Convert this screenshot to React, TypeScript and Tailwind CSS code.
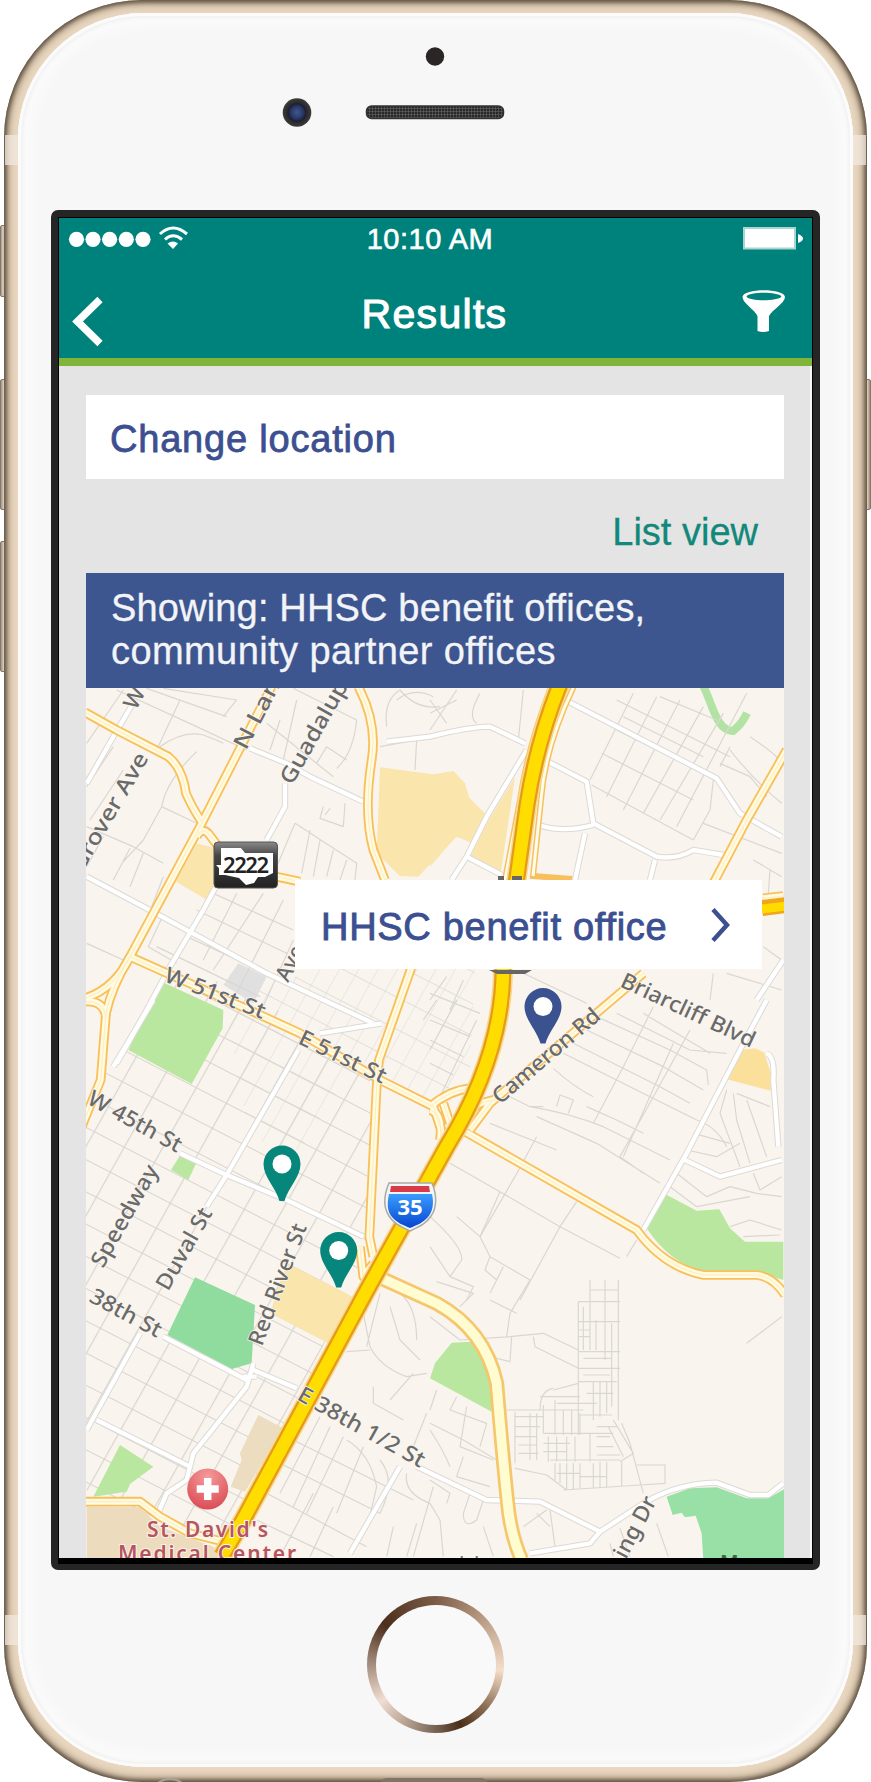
import type { ReactNode } from "react";

type TileName = "nw" | "ne" | "w" | "e" | "sw" | "se";

// Origin of every map tile; tile paths are drawn at three units per pixel.
const tileOrigin: Record<TileName, [number, number]> = {
  nw: [80, 680],
  ne: [430, 680],
  w: [80, 1000],
  e: [430, 1000],
  sw: [80, 1280],
  se: [430, 1280],
};

function Tile({ at, children }: { at: TileName; children: ReactNode }) {
  const [x, y] = tileOrigin[at];
  return <g transform={`translate(${x} ${y}) scale(0.33333)`}>{children}</g>;
}

type Road = [TileName, string];

const areas: [TileName, string, string][] = [
  ["nw", "#fae5ac", "M900 262 L1075 285 L1120 275 L1160 345 L1210 400 L1180 490 L1130 470 L1080 520 L1015 590 L960 588 L890 520 Z"],
  ["ne", "#fae5ac", "M0 285 L70 273 L105 310 L118 355 L165 400 L125 490 L82 465 L0 560 Z"],
  ["ne", "#fae5ac", "M255 290 L230 460 L212 578 L118 535 L170 430 Z"],
  ["nw", "#fae5ac", "M350 490 L405 505 L415 620 L378 658 L288 605 Z"],
  ["nw", "#e0e0e1", "M475 850 L560 890 L520 970 L430 915 Z"],
  ["w", "#b9e79f", "M245 -55 L430 30 L428 85 L335 252 L145 150 Z"],
  ["w", "#b9e79f", "M305 458 L350 487 L325 540 L273 510 Z"],
  ["w", "#fae5ac", "M620 790 L818 890 L745 1030 L570 940 Z"],
  ["sw", "#90dc9e", "M345 -8 L525 75 L515 250 L455 267 L262 165 Z"],
  ["sw", "#b9e79f", "M120 495 L220 560 L150 612 L140 635 L40 650 Z"],
  ["sw", "#ecdcc0", "M535 405 L610 445 L495 635 L452 620 L485 540 L480 520 Z"],
  ["sw", "#ecdcbd", "M20 680 L180 682 L240 740 L400 800 L430 835 L20 835 Z"],
  ["se", "#b9e79f", "M65 188 L125 185 L165 240 L180 300 L185 395 L0 295 L15 250 Z"],
  ["e", "#b9e79f", "M705 582 L800 632 L868 628 L900 685 L945 725 L1060 725 L1060 840 L980 815 L820 815 Q720 790 650 685 Z"],
  ["e", "#fae09b", "M930 150 L975 145 L1003 158 L1022 220 L1022 272 L890 238 Z"],
  ["se", "#99e0a6", "M710 650 L780 625 L860 622 L950 655 L1015 655 L1062 628 L1062 840 L820 840 L815 760 L797 707 L765 712 L755 698 L728 705 Z"],
];

const lanes: Road[] = [
  ["nw", "M20 190 L130 30 M20 320 L100 200 M30 420 L130 270 M110 30 L350 140 L500 210 M200 25 L440 110 M240 200 Q310 150 370 165 Q410 180 430 190 M250 25 L470 60 L430 110 M300 60 L230 210 M350 215 Q260 300 245 380 L190 480 L130 545 M20 440 L160 500 L250 550 M245 380 L350 430 M70 470 L20 560 M150 505 L100 600 M190 520 L150 620"],
  ["nw", "M640 25 L830 120 Q820 220 770 265 M560 130 L760 290 M600 120 L570 210 M650 60 L610 240 M710 250 L740 200 L800 240 M920 140 Q910 60 960 30 Q1010 90 1080 80 M900 200 L1010 180 L1005 270 M950 60 Q1000 20 1060 50 M730 380 L720 415 L790 440 L795 370 M750 385 L735 405"],
  ["nw", "M645 430 L590 560 M645 430 L830 550 L825 600 M690 450 L665 580 M720 480 L700 590 M760 510 L740 590 M800 540 L780 600 M20 790 L130 840 M250 590 L215 680"],
  ["nw", "M400 640 L640 750 M350 690 L620 820 M320 770 L560 880 M245 715 L205 800 L290 850 M470 640 L370 840 M550 640 L400 870 M610 660 L460 960 M640 780 L540 1000 M230 800 L540 950"],
  ["ne", "M80 30 L0 150 M150 40 Q110 110 140 130 M280 30 L265 180 M0 60 L50 130 M0 100 L80 60"],
  ["ne", "M610 40 L480 300 M680 50 L530 350 M750 60 L580 390 M820 80 L640 400 M880 100 L690 420 M950 40 L740 440 M850 300 L840 390 L790 480 M560 60 L900 230 M560 150 L700 220 M515 220 L790 360 M580 110 L820 230 M485 315 L790 480 M690 50 L860 120 M820 430 L1055 520 M900 210 Q970 300 1055 370 M960 170 Q1020 210 1050 240 M870 250 L960 290 L1010 350 M900 200 L870 260"],
  ["ne", "M970 540 L1055 590 M1020 570 L1015 640 M890 880 L1055 930 M850 880 L840 960 M1000 800 L1055 840 M280 880 L470 970 M0 940 L150 1000 M50 890 L0 960 M100 900 L60 990"],
  ["e", "M20 0 L-20 60 M80 0 L0 150 M140 60 L30 290 M0 60 L120 110 M0 120 L100 170 M0 190 L70 225 M370 205 Q430 260 490 290 M400 160 L600 260 L740 330 L800 360 Q860 380 890 440 M430 130 L690 260 L780 310 M470 90 L700 200 L820 270 M500 50 L720 150 L830 210 L835 255 M560 40 L780 150 L890 160 M640 40 L840 160 M670 20 L580 200 L490 370 M780 90 L670 290 L570 470 M730 130 L580 470 M340 320 L300 320 L240 290 M300 320 Q420 340 520 380 L720 480 M320 350 L500 430 L690 550 M380 320 L390 285 L430 300 L415 340 M180 370 L380 450 M320 410 L255 530 L150 710 M570 470 L640 520 M470 320 L560 360 L640 400"],
  ["e", "M890 270 L870 340 L930 500 M910 280 L920 360 L960 490 M950 300 L1010 470 M920 280 L1020 320 M770 450 L860 470 L930 430 M790 400 L900 430 M740 520 L830 590 L900 560 L980 580 L1055 590 M720 560 L800 620 L960 590 M970 520 L990 570 L1055 530 M900 680 L960 660 L1055 690 M940 710 L1050 705"],
  ["e", "M60 490 L210 575 L390 680 L570 775 M440 605 L390 680 L270 900 M590 770 L620 720 M210 575 L150 710 L180 770 L300 840 M80 650 L150 710 M180 770 L165 810 L200 840 M0 650 Q100 740 95 780 L60 830 L130 860 L110 900 M0 740 L60 830 M220 800 L180 880"],
  ["se", "M0 110 L90 180 L240 170 L340 160 L445 210 M310 170 L315 200 L445 265 M300 0 L240 100 L230 170 M180 60 L260 100 M245 170 L240 245 L180 230 M20 5 L130 40 L90 80 M950 190 L1055 110"],
  ["se", "M480 0 V210 M525 0 V240 M565 0 V420 M445 65 V465 M445 65 H570 M445 125 H570 M445 215 H570 M445 265 H570 M445 305 H560 M460 80 V210 M498 120 V210 M545 130 V380 M445 150 H480 M445 170 H480 M480 30 H565 M460 235 H545 M460 285 H540 M490 305 V420 M510 305 V410 M530 305 V400 M470 340 H550 M450 370 H500 M450 405 H545 M370 330 L445 310 M330 390 Q330 330 370 325 M330 350 H450 M380 370 H450 M230 390 H460 M255 395 V550 M340 375 V460 M375 360 V465 M400 390 V465 M425 390 V465 M450 400 V465"],
  ["se", "M255 410 H340 M255 440 H330 M255 470 H320 M265 495 H320 M265 520 H325 M300 400 V540 M320 400 V540 M355 470 V545 M380 470 V545 M410 470 V545 M435 470 V545 M480 460 V545 M340 460 H550 M340 490 H420 M340 515 H410 M360 540 H570 M500 440 H560 M500 470 H540 M500 500 H550 M500 525 H570 M550 420 L610 520 L570 545 M535 440 L580 530 M575 430 L600 490 L640 640 M375 550 V600 M390 550 V610 M410 550 V630 M430 550 V630 M450 550 V625 M490 550 V625 M510 545 V625 M530 545 V620 M575 545 V620 M400 630 L630 615 L705 610 V555 H620 M255 565 L350 585 L410 630 M380 580 H450 M450 590 H530"],
  ["se", "M0 450 Q40 510 60 560 M20 330 L0 390 M80 350 L60 390 L170 430 L150 500 M110 380 L90 500 L190 540 M0 430 L100 480 L200 540 M100 530 L80 590 L180 620 M0 600 L60 640 L50 670 M120 640 L100 700 Q100 750 140 720 L160 660 M0 670 L30 720 L40 830 M160 740 L190 830 M280 740 L350 690 M320 700 L360 740 M360 690 L375 800 M570 745 L600 830 M680 730 L715 830 M540 790 L550 830"],
  ["sw", "M850 100 L870 200 Q900 260 980 290 L1040 280 M900 40 L860 200 M930 80 L960 180 L1020 240 M960 40 Q1010 80 1010 180 M870 210 L800 215 M880 320 L880 370 L970 420 M1000 280 L930 360 M750 440 L640 680 M790 470 L680 700 M720 410 L600 640 M850 500 L770 700 M800 480 Q870 520 890 620 L860 750 M900 540 Q950 600 900 700 M640 480 L1000 660 M600 550 L900 700 M560 640 L860 800 M530 720 L760 830 M700 640 L600 830 M760 680 L690 830 M980 580 Q970 640 1050 670 M1010 730 L980 830 M940 740 L920 830 M1060 620 L1000 830 M1040 400 L1000 500"],
];

const streets: Road[] = [
  ["nw", "M165 60 L100 170 L20 310"],
  ["nw", "M20 590 L200 685 L560 880 L880 1030"],
  ["nw", "M510 205 L620 250 L690 290 L850 365"],
  ["nw", "M615 310 L615 380 L560 480 M405 625 L370 690 L270 860 L200 990 L110 1150"],
  ["ne", "M-130 185 L0 170 Q120 140 180 140 L285 190 M415 65 L860 295 L930 400 L1055 470 M290 210 L170 410 L110 530 L65 600 M110 530 L215 585"],
  ["ne", "M335 235 L470 305 L490 430 L680 530 Q740 540 790 510 L880 525 M325 435 Q400 460 490 435 M465 460 L435 600 M675 540 L660 600"],
  ["w", "M720 100 L905 70 M655 150 L440 525 L380 620 M300 460 L440 525 L620 600 L850 710 M220 0 L100 200"],
  ["e", "M1010 0 L930 150 L770 460 L640 690 M1010 160 Q1035 170 1030 240 L1045 440 M765 480 L870 530 L1055 480 M1060 -120 L980 0"],
  ["se", "M-40 560 L170 660 L330 665 L510 755 L640 670 Q740 610 860 608 L960 645 L1015 645 L1060 610 M510 755 L480 790 L300 820"],
  ["sw", "M180 160 L20 450 M250 170 L500 300 M50 420 L330 560 M520 250 L500 320 L340 520 L320 600 L260 640 L230 710 M520 270 L650 325 M960 560 L810 820 M490 290 L530 290"],
];

const arterials: Road[] = [
  ["nw", "M15 97 L110 150 L265 230 Q308 265 318 340 Q340 390 365 425"],
  ["nw", "M595 -20 L365 430 L150 830 Q105 925 15 955"],
  ["nw", "M150 830 Q95 920 78 1000 L62 1200 L5 1340"],
  ["nw", "M150 830 L530 1000 L660 1060 L900 1200 L1060 1280 L1090 1370"],
  ["nw", "M835 20 Q893 130 875 240 Q850 400 880 510 L915 600"],
  ["nw", "M350 470 Q365 440 385 460 L415 500 M590 590 L660 605"],
  ["nw", "M995 860 L897 1140 L890 1220 L868 1670 L880 1730"],
  ["nw", "M15 965 Q70 960 78 1010"],
  ["ne", "M1070 210 L950 420 L850 610"],
  ["ne", "M1000 655 L1060 648"],
  ["e", "M640 -80 L540 5 L180 310 L120 390"],
  ["e", "M105 395 L620 690 Q700 800 820 825 L980 825 Q1030 830 1065 885"],
  ["e", "M0 320 Q60 270 120 265 M0 330 Q40 340 30 420 M40 310 L60 370 M110 340 L150 310 L190 300"],
  ["w", "M840 740 L850 830 L880 790"],
  ["sw", "M15 665 L180 665 L240 710 L330 760 L450 790"],
];

const labels: [string, number, number, number, number][] = [
  ["W", 136, 711, 146, 692],
  ["N Lamar", 246, 751, 298, 652],
  ["Guadalupe", 292, 786, 356, 673],
  ["Grover Ave", 82, 873, 149, 758],
  ["W 51st St", 163, 981, 262, 1019],
  ["E 51st St", 297, 1043, 382, 1084],
  ["W 45th St", 86, 1103, 177, 1153],
  ["Speedway", 103, 1269, 159, 1170],
  ["Duval St", 168, 1292, 213, 1213],
  ["Red River St", 262, 1347, 307, 1227],
  ["38th St", 88, 1301, 157, 1338],
  ["E 38th 1/2 St", 296, 1399, 420, 1468],
  ["Cameron Rd", 500, 1105, 602, 1018],
  ["Briarcliff Blvd", 619, 986, 751, 1048],
  ["Ave", 288, 983, 305, 950],
  ["ing Dr", 626, 1560, 657, 1501],
];

function RoadLayer({ roads, width, color }: { roads: Road[]; width: number; color: string }) {
  return (
    <>
      {roads.map(([tile, d], i) => (
        <Tile key={i} at={tile}>
          <path d={d} fill="none" stroke={color} strokeWidth={width} strokeLinejoin="round" />
        </Tile>
      ))}
    </>
  );
}

function StreetLabel({ label }: { label: [string, number, number, number, number] }) {
  const [text, x1, y1, x2, y2] = label;
  const angle = (Math.atan2(y2 - y1, x2 - x1) * 180) / Math.PI;
  const length = Math.hypot(x2 - x1, y2 - y1);
  return (
    <text
      transform={`translate(${x1} ${y1}) rotate(${angle})`}
      textLength={length}
      lengthAdjust="spacingAndGlyphs"
      fontSize="22"
      fontWeight="500"
      fill="#6a6a6a"
      stroke="#faf7f0"
      strokeWidth="1.500"
      paintOrder="stroke"
    >
      {text}
    </text>
  );
}

function Pin({ x, y, color }: { x: number; y: number; color: string }) {
  return (
    <g transform={`translate(${x} ${y})`}>
      <path d="M-2.500 37 C-6 24 -18.500 13 -18.500 0 A18.500 18.500 0 0 1 18.500 0 C18.500 13 6 24 2.500 37 Z" fill={color} />
      <circle r="9.500" fill="#fff" />
    </g>
  );
}

const freeway = "M566 670 C546 716 534 760 527 805 L517 877 L503 968 C503 1030 480 1092 447 1146 L367 1290 L243 1520 L222 1556";
const parkway = "M-145 -5 L20 70 Q165 150 200 310 Q218 530 232 660 Q240 760 275 840";

function CityMap() {
  return (
    <svg viewBox="86 688 698 870" className="block h-[870px] w-[698px] [font-family:'Noto_Sans',sans-serif]">
      <defs>
        <pattern id="blocks" width="1" height="1" patternUnits="userSpaceOnUse" patternTransform="matrix(30 15.500 -14 25 90 1000)">
          <path d="M0 0 H1 M0 0 V1" stroke="#d8d4ce" strokeWidth="0.07" />
        </pattern>
        <pattern id="smallBlocks" width="1" height="1" patternUnits="userSpaceOnUse" patternTransform="matrix(15 7.700 -14 25 90 1000)">
          <path d="M0 0 H1 M0 0 V1" stroke="#dcd9d4" strokeWidth="0.06" />
        </pattern>
        <linearGradient id="shield" x1="0" y1="0" x2="0" y2="1">
          <stop offset="0" stopColor="#3a9cff" />
          <stop offset="1" stopColor="#0646cf" />
        </linearGradient>
        <linearGradient id="plate" x1="0" y1="0" x2="0" y2="1">
          <stop offset="0" stopColor="#8a8a8a" />
          <stop offset="0.300" stopColor="#444" />
          <stop offset="1" stopColor="#222" />
        </linearGradient>
        <radialGradient id="hospital" cx="0.500" cy="0.200" r="0.900">
          <stop offset="0" stopColor="#f49a9a" />
          <stop offset="1" stopColor="#d8434d" />
        </radialGradient>
      </defs>
      <rect x="86" y="688" width="698" height="870" fill="#f9f4ee" />
      <path d="M86 1120 L110 1060 L130 1050 L165 985 L235 980 L370 1075 L370 1240 L330 1330 L300 1400 L245 1510 L210 1540 L86 1490 Z" fill="url(#blocks)" />
      <path d="M225 1005 L300 975 L410 920 L475 965 L470 1070 L440 1110 L380 1080 L360 1055 L300 1150 L250 1140 Z" fill="url(#smallBlocks)" />
      {areas.map(([tile, fill, d], i) => (
        <Tile key={i} at={tile}>
          <path d={d} fill={fill} />
        </Tile>
      ))}
      <path d="M700 680 C712 698 714 730 733 731 Q742 724 747 713" fill="none" stroke="#b3e3a4" strokeWidth="8" />
      <RoadLayer roads={lanes} width={3.6} color="#dad7d2" />
      <RoadLayer roads={streets} width={19} color="#dcdad6" />
      <RoadLayer roads={streets} width={13} color="#ffffff" />
      <path d="M553 682 Q528 745 520 800 L504 885 M576 682 Q545 745 541 800 L533 876 L572 879" fill="none" stroke="#f7c05c" strokeWidth="6" />
      <path d="M553 682 Q528 745 520 800 L504 885 M576 682 Q545 745 541 800 L533 876" fill="none" stroke="#fffceb" strokeWidth="3" />
      <RoadLayer roads={arterials} width={29} color="#f9c05a" />
      <RoadLayer roads={arterials} width={18} color="#fffae0" />
      <RoadLayer roads={arterials} width={2} color="#fbe6b0" />
      <Tile at="se">
        <path d={parkway} fill="none" stroke="#f6c66c" strokeWidth="45" />
        <path d={parkway} fill="none" stroke="#fffcd2" strokeWidth="29" />
      </Tile>
      <path d={freeway} fill="none" stroke="#f8d98a" strokeWidth="20" />
      <path d={freeway} fill="none" stroke="#e59a1c" strokeWidth="17" />
      <path d={freeway} fill="none" stroke="#ffdd00" strokeWidth="12.500" />
      <path d="M762 908 L786 905" stroke="#efa51c" strokeWidth="16" />
      <path d="M762 909 L786 906" stroke="#ffdb00" strokeWidth="9" />
      <g>
        {labels.map((label) => (
          <StreetLabel key={label[0]} label={label} />
        ))}
      </g>
      <g fontSize="21" fontWeight="600" fill="#b65560" stroke="#fbf3ea" strokeWidth="2" paintOrder="stroke">
        <text x="147" y="1537" textLength="121">St. David's</text>
        <text x="118" y="1561" textLength="178">Medical Center</text>
      </g>
      <text x="452" y="1571" fontSize="20" fill="#707070">d</text>
      <text x="467" y="1571" fontSize="20" fill="#707070">d</text>
      <text x="720" y="1569" fontSize="20" fontWeight="600" fill="#376b42">Mue</text>

      <rect x="214" y="842" width="63.500" height="46" rx="4" fill="url(#plate)" stroke="#555" />
      <path d="M221 848 h20 l4 5 h28 v20 l-8 4 h-7 l-4 6 -8 2 -7 -7 -14 -3 -6 0 v-7 l-3 -3 h5 z" fill="#fff" />
      <text x="246" y="873" textAnchor="middle" textLength="46" fontSize="22" fontWeight="600" fill="#222">2222</text>
      <path d="M489 970 h43 l-7 4 h-28 z M498 876 h6 v4 h-6 z M512 876 h10 v4 h-10 z" fill="#666" />

      <path d="M389 1183 h43 c5 12 5 25 -1 33 c-5 8 -13 11 -21 15 c-8 -4 -16 -7 -21 -15 c-6 -9 -5 -21 0 -33z" fill="#f4f5f7" stroke="#aaa9aa" strokeWidth="1.500" />
      <path d="M391 1186 h38 l1 6 h-40 z" fill="#d83b48" />
      <path d="M389 1194 h43 c2 9 1 17 -4 23 c-5 6 -11 8 -18 11 c-7 -3 -13 -5 -18 -11 c-5 -6 -5 -14 -3 -23z" fill="url(#shield)" />
      <text x="410" y="1215" textAnchor="middle" fontSize="22" fontWeight="700" fill="#fff">35</text>

      <circle cx="207.700" cy="1489" r="20.500" fill="url(#hospital)" />
      <path d="M207.700 1478 v22 M196.700 1489 h22" stroke="#fff" strokeWidth="7.500" />

      <Pin x={282} y={1164} color="#07867b" />
      <Pin x={338.7} y={1250.5} color="#07867b" />
      <Pin x={543} y={1006.500} color="#3a5290" />
    </svg>
  );
}

function StatusBar() {
  return (
    <div className="grid h-[42px] grid-cols-3 items-center text-white">
      <svg viewBox="59 218 140 42" className="h-[42px] w-[140px]">
        {[76.5, 93, 109.6, 126.3, 143].map((cx) => (
          <circle key={cx} cx={cx} cy="239.300" r="7.600" fill="#fff" />
        ))}
        <g fill="none" stroke="#fff" strokeWidth="3">
          <path d="M160 234 Q173 222 187 234" />
          <path d="M165 239.500 Q173 232 182 239.500" />
        </g>
        <path d="M167.500 243.500 Q173 239.500 178 243.500 L173 249 Z" fill="#fff" />
      </svg>
      <div className="pr-[11px] text-center text-[29px] leading-[40px] tracking-[0.500px] [-webkit-text-stroke:0.600px_#fff]">10:10 AM</div>
      <svg viewBox="732 218 80 42" className="h-[42px] w-20 justify-self-end">
        <rect x="744" y="228" width="51" height="20.500" fill="#fff" stroke="#a9d5d0" strokeWidth="2" />
        <path d="M798 234 Q803 236 803 238.500 Q803 241 798 243 Z" fill="#fff" />
      </svg>
    </div>
  );
}

function TitleBar() {
  return (
    <div className="grid h-[98px] grid-cols-3 text-white">
      <svg viewBox="59 260 60 98" className="h-[98px] w-[60px]">
        <path d="M100 299.500 L77.500 321.500 L100 343.500" fill="none" stroke="#fff" strokeWidth="7.500" />
      </svg>
      <h1 className="pt-2 pr-0.5 text-center text-[41px] leading-[93px] font-normal tracking-[1.300px] [-webkit-text-stroke:1.100px_#fff]">Results</h1>
      <svg viewBox="732 260 80 98" className="h-[98px] w-20 justify-self-end">
        <path
          d="M742.500 297 C743 288 784.500 288 785 297 C785 303 772 310 769 316 V331 Q763 333 757.500 331 V316 C755 310 742.500 303 742.500 297 Z M746.500 296.500 C749 301.500 778 301.500 781.500 296.500 C778 291.500 749 291.500 746.500 296.500 Z"
          fill="#fff"
          fillRule="evenodd"
        />
      </svg>
    </div>
  );
}

function Screen() {
  return (
    <div className="h-[1340px] w-[753px] overflow-hidden bg-[#e4e4e4]">
      <header className="h-[148px] border-b-8 border-[#80b53a] bg-[#00827c]">
        <StatusBar />
        <TitleBar />
      </header>
      <main className="flex h-[1192px] flex-col border-r-2 border-[#f6f6f6] pl-[27px]">
        <div className="mt-[29px] h-[84px] w-[698px] bg-white pl-[24px] text-[38px] leading-[88px] tracking-[0.800px] text-[#3c4f90] [-webkit-text-stroke:0.800px_#3c4f90]">Change location</div>
        <div className="h-[94px] w-[698px] pr-[26px] text-right text-[38px] leading-[107px] text-[#12887a] [-webkit-text-stroke:0.300px_#12887a]">List view</div>
        <div className="h-[115px] w-[698px] bg-[#3e568f] pt-[14px] pl-[25px] text-[38px] leading-[43px] tracking-[0.160px] text-[#f2f4f8] [-webkit-text-stroke:0.300px_#f2f4f8]">
          Showing: HHSC benefit offices,
          <br />
          <span className="tracking-[0.420px]">community partner offices</span>
        </div>
        <div className="relative w-[698px]">
          <CityMap />
          <div className="absolute top-[192px] left-[209px] flex h-[89px] w-[467px] items-center justify-between bg-white pr-[32px] pl-[26px] text-[38px] tracking-[0.700px] text-[#3c4f90]">
            <span className="pt-1.5 whitespace-nowrap [-webkit-text-stroke:0.900px_#3c4f90]">HHSC benefit office</span>
            <svg viewBox="0 0 20 36" className="h-9 w-5">
              <path d="M3 2.500 L17 18 L3 33.500" fill="none" stroke="#3c4f90" strokeWidth="4.500" />
            </svg>
          </div>
        </div>
      </main>
    </div>
  );
}

function SensorArray() {
  return (
    <svg viewBox="270 40 250 100" className="mt-[27px] ml-[252px] h-[100px] w-[250px] shrink-0 self-start">
      <defs>
        <radialGradient id="lens">
          <stop offset="0" stopColor="#44588d" />
          <stop offset="0.450" stopColor="#253765" />
          <stop offset="0.620" stopColor="#1c2030" />
          <stop offset="0.700" stopColor="#2b2b2b" />
          <stop offset="1" stopColor="#3c3c3c" />
        </radialGradient>
        <pattern id="mesh" width="3" height="3" patternUnits="userSpaceOnUse">
          <rect width="3" height="3" fill="#292929" />
          <path d="M0 0 H3 M0 0 V3" stroke="#6e6e6e" strokeWidth="1" />
        </pattern>
      </defs>
      <circle cx="435" cy="56.500" r="9.200" fill="#2a2625" />
      <circle cx="297" cy="112.500" r="14.300" fill="url(#lens)" />
      <rect x="366.500" y="106" width="137" height="12.500" rx="5" fill="url(#mesh)" stroke="#333" strokeWidth="1.500" />
    </svg>
  );
}

const sideButton = "absolute rounded-[2px] border border-[#83786a] bg-linear-to-r from-[#a2968a] via-[#e3d3c0] to-[#a08b74]";

export default function App() {
  return (
    <div className="relative h-[1782px] w-[871px] overflow-hidden bg-white px-1 [font-family:'Liberation_Sans',Arial,sans-serif]">
      <div className={`${sideButton} top-[225px] left-0 h-[72px] w-[6px]`} />
      <div className={`${sideButton} top-[379px] left-0 h-[131px] w-[8px]`} />
      <div className={`${sideButton} top-[541px] left-0 h-[131px] w-[8px]`} />
      <div className={`${sideButton} top-[379px] right-0 h-[131px] w-[8px]`} />
      <div className="relative h-[1782px] w-[863px] overflow-hidden rounded-[138px] bg-[#ead7bf] px-[14px] pt-[13px] shadow-[inset_0_0_4px_2px_#5b4f41,inset_0_0_10px_3px_#8f7d68]">
        <div className="absolute top-[135px] left-px h-[30px] w-[861px] bg-[#f1e8df]/75" />
        <div className="absolute top-[1615px] left-px h-[30px] w-[861px] bg-[#f1e8df]/75" />
        <div className="absolute -bottom-[38px] left-[145px] size-[42px] rounded-full border-2 border-[#aaa096]" />
        <div className="absolute -bottom-[3px] left-[376px] h-[7px] w-[108px] rounded-t-full bg-[#817467]" />
        <div className="relative flex h-[1754px] w-[835px] flex-col items-center rounded-[126px] bg-[#f7f7f7] shadow-[inset_0_0_0_3px_#fbfbfb,inset_0_0_3px_5px_#f1f1f1,inset_0_0_12px_13px_#fbfbfb]">
          <SensorArray />
          <div className="mt-[70px] h-[1360px] w-[769px] shrink-0 rounded-[7px] bg-[#252525] px-[7px] pt-[7px]">
            <div className="h-[1347px] bg-black px-px pt-px">
              <Screen />
            </div>
          </div>
          <div className="mt-[26px] size-[137px] shrink-0 rounded-full bg-[conic-gradient(#7c5c47_0deg,#b89a82_45deg,#f4ddca_95deg,#8d7054_130deg,#4b2e18_158deg,#776354_180deg,#a89382_200deg,#f1ded2_236deg,#a68e7e_270deg,#4b2e1b_308deg,#7c5c47_360deg)] p-[8.500px]">
            <div className="size-full rounded-full bg-[#f9f9f9]" />
          </div>
        </div>
      </div>
    </div>
  );
}
